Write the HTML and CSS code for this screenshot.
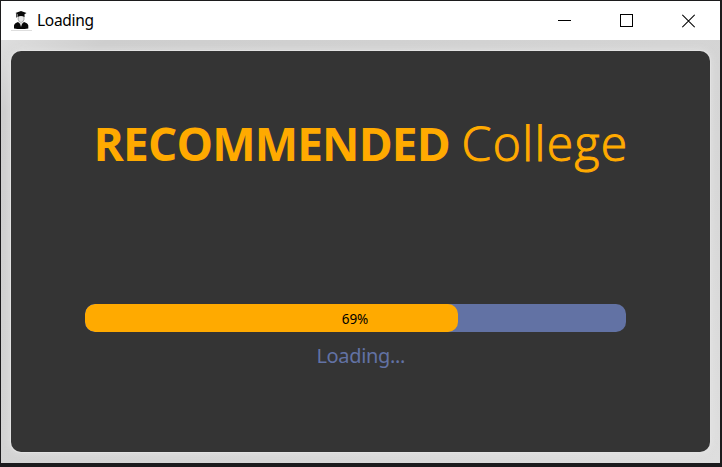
FILE: index.html
```html
<!DOCTYPE html>
<html lang="en">
<head>
<meta charset="utf-8">
<title>Loading</title>
<link rel="stylesheet" href="styles.css">
</head>
<body>
<div class="window">
  <header class="titlebar">
    <svg class="app-icon" width="22" height="22" viewBox="0 0 22 22">
      <path d="M1 20.5H22" stroke="#dedede"/>
      <path d="M4 18.5V15.5Q4.300 13.200 8 12L11 14.500L14 12Q18 13.200 18.300 15.500V18.500Q11 19.500 4 18.500Z" fill="#080808"/>
      <path d="M8.200 5.500H14V9.500Q13 12.500 11 12.500Q9 12.500 8.200 9.500Z" fill="#e8e8e8" stroke="#777" stroke-width=".6"/>
      <path d="M9.500 12L11 17L12.700 12L11 13Z" fill="#ddd"/>
      <path d="M5.500 3L11 1L16.500 3L14.500 4.200V7Q11 5 7.500 7V4.200Z" fill="#080808"/>
      <path d="M6.500 3.500V7.500" stroke="#222" stroke-width=".8"/>
    </svg>
    <span class="caption">Loading</span>
    <div class="controls">
      <svg width="13" height="14" viewBox="0 0 13 14"><path d="M0 6.500H13" stroke="#000"/></svg>
      <svg width="14" height="14" viewBox="0 0 14 14"><rect x=".5" y=".5" width="12" height="12" fill="none" stroke="#000"/></svg>
      <svg width="13" height="14" viewBox="0 0 13 14"><path d="M.3 .8L12.700 13.200M12.700 .8L.3 13.200" stroke="#000" stroke-width="1.100"/></svg>
    </div>
  </header>
  <main class="content">
    <section class="card">
      <h1 class="title"><strong>RECOMMENDED</strong><span>College</span></h1>
      <div class="progress">
        <div class="bar" style="width: 373px"></div>
        <span class="percent">69%</span>
      </div>
      <p class="status">Loading...</p>
    </section>
  </main>
</div>
</body>
</html>
```
FILE: styles.css
```css
* { box-sizing: border-box; }
body {
  margin: 0;
  height: 467px;
  padding: 1px 2px 4px 1px;
  overflow: hidden;
  background: #1c1b1d;
  font-family: "Noto Sans", "Open Sans", sans-serif;
}
.window { height: 462px; display: flex; flex-direction: column; }
.titlebar {
  height: 39px;
  display: flex;
  align-items: center;
  padding: 0 25px 0 9px;
  background: #fff;
}
.app-icon { display: block; }
.caption { margin: -1px 0 0 5px; font-size: 15.5px; line-height: 20px; letter-spacing: -.3px; color: #000; }
.controls { margin-left: auto; display: flex; gap: 48.5px; }
.controls svg { display: block; }
.content {
  flex: 1;
  padding: 11px 10.5px 11px 10px;
  background: linear-gradient(145deg, #dedede 0%, #cecece 8%, #d6d6d6 65%, #dedede 100%);
}
.card {
  height: 401px;
  border-radius: 10px;
  background: #343434;
  box-shadow: 0 0 0 1px #e2e2e2, 0 0 9px rgba(240, 240, 240, .6);
  padding: 60px 74px 0;
}
.title {
  display: flex;
  margin: 0 0 0 7.5px;
  height: 64px;
  line-height: 64px;
  font-family: "Open Sans", sans-serif;
  font-size: 46px;
  font-weight: 300;
  color: #ffaa00;
  white-space: nowrap;
}
.title strong { width: 369px; padding-left: 1px; font-weight: 700; letter-spacing: -.85px; }
.title span { font-size: 48px; letter-spacing: 1.4px; -webkit-text-stroke: 1px #ffaa00; }
.progress {
  display: grid;
  width: 541px;
  height: 28px;
  margin-top: 129px;
  border-radius: 10px;
  background: #6272a4;
  overflow: hidden;
}
.bar, .percent { grid-area: 1 / 1; }
.bar { height: 28px; border-radius: 10px; background: #ffaa00; }
.percent { padding-right: 1px; text-align: center; font-size: 13.5px; line-height: 30px; color: #000; }
.status {
  margin: 9px 0 0 1px;
  text-align: center;
  font-size: 20px;
  line-height: 30px;
  letter-spacing: -.35px;
  color: #6272a4;
}
```
